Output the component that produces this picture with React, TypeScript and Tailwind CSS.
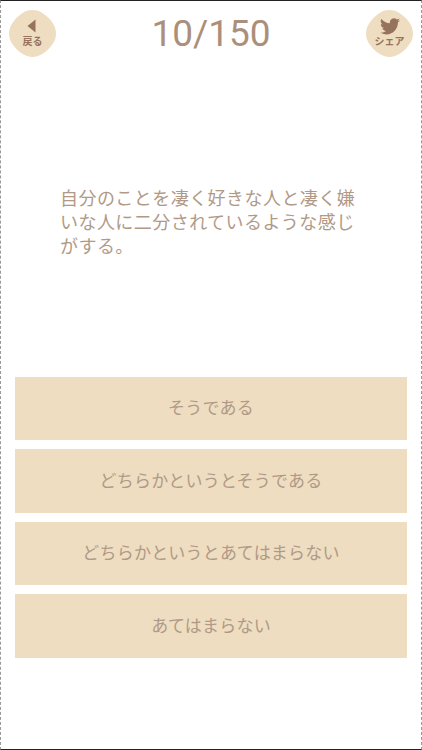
import React from "react";

const answers = [
  "そうである",
  "どちらかというとそうである",
  "どちらかというとあてはまらない",
  "あてはまらない",
];

function RoundButton({ label, children }: { label: string; children: React.ReactNode }) {
  return (
    <div className="relative w-[47px] h-[47px] flex flex-col items-center pt-[7px]">
      {/* blob background */}
      <svg className="absolute inset-0" width="47" height="47" viewBox="0 0 46 46">
        <path
          d="M23 0C29.500 0 34 3.500 38.500 7.500C42.500 11.500 46 16.500 46 23C46 29.500 42.500 34 38.500 38.500C34 42.500 29.500 46 23 46C16.500 46 12 42.500 7.500 38.500C3.500 34 0 29.500 0 23C0 16.500 3.500 12 7.500 7.500C12 3.500 16.500 0 23 0Z"
          fill="#eeddc0"
        />
      </svg>
      <div className="relative h-[18px] flex items-center justify-center">{children}</div>
      <span className="relative text-[10px] leading-[12px] font-bold text-[#96735c]">{label}</span>
    </div>
  );
}

export default function App() {
  return (
    <div
      className="w-[422px] h-[750px] bg-white border-t border-b border-t-[#222] border-b-[#222] border-l border-r border-l-[#999] border-r-[#999] flex flex-col overflow-hidden text-[#a88f79]"
      style={{ fontFamily: '"Noto Sans CJK JP", "Liberation Sans", sans-serif', borderLeftStyle: "dashed", borderRightStyle: "dashed" }}
    >
      <div className="flex justify-between items-start pt-[9px] pl-[8px] pr-[8px]">
        <RoundButton label="戻る">
          <svg className="mr-[3px]" width="9" height="14" viewBox="0 0 9 14">
            <path d="M8.500 0.500 L0.500 7 L8.500 13.500 Z" fill="#96735c" />
          </svg>
        </RoundButton>
        <div
          className="text-[37px] leading-[48px] text-[#ab8f7b]"
          style={{ fontFamily: "Roboto, sans-serif" }}
        >
          10/150
        </div>
        <RoundButton label="シェア">
          <svg width="20" height="17" viewBox="0 0 24 20">
            <path
              d="M24 2.400a9.800 9.800 0 0 1-2.800.8 4.900 4.900 0 0 0 2.200-2.700 9.800 9.800 0 0 1-3.100 1.200A4.900 4.900 0 0 0 11.900 6.100 14 14 0 0 1 1.700.9a4.900 4.900 0 0 0 1.500 6.600 4.900 4.900 0 0 1-2.200-.6v.1a4.900 4.900 0 0 0 3.900 4.800 4.900 4.900 0 0 1-2.200.1 4.900 4.900 0 0 0 4.600 3.400A9.900 9.900 0 0 1 0 17.300 14 14 0 0 0 7.500 19.500c9.100 0 14-7.500 14-14v-.6A10 10 0 0 0 24 2.400z"
              fill="#96735c"
            />
          </svg>
        </RoundButton>
      </div>

      <div className="mt-[127px] pl-[59px] pr-[55px] text-[18px] leading-[24px] tracking-[0.45px] text-[#b09a87]">
        自分のことを凄く好きな人と凄く嫌いな人に二分されているような感じがする。
      </div>

      <div className="mt-[119.500px] px-[14px] flex flex-col gap-[9px]">
        {answers.map((a) => (
          <div
            key={a}
            className="h-[63.500px] bg-[#eeddc0] flex items-center justify-center pb-[3px] text-[17px] tracking-[0.2px] text-[#b09a87]"
          >
            {a}
          </div>
        ))}
      </div>
    </div>
  );
}
